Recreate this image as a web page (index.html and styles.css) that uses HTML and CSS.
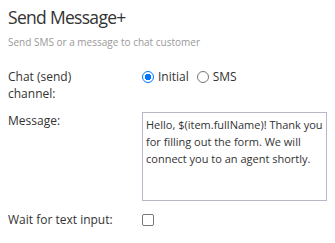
FILE: index.html
```html
<!DOCTYPE html>
<html>
<head>
<meta charset="utf-8">
<link rel="stylesheet" href="styles.css">
</head>
<body>
<div class="panel">
  <h1 class="title">Send Message+</h1>
  <p class="subtitle">Send SMS or a message to chat customer</p>
  <div class="form">
    <div class="label label-chat">Chat (send) channel:</div>
    <div class="control radios">
      <label class="radio"><span class="dot checked"></span>Initial</label>
      <label class="radio"><span class="dot"></span>SMS</label>
    </div>
    <div class="label label-msg">Message:</div>
    <div class="control">
      <div class="textarea">Hello, $(item.fullName)! Thank you for filling out the form. We will connect you to an agent shortly.</div>
    </div>
    <div class="label label-wait">Wait for text input:</div>
    <div class="control check-wrap">
      <span class="checkbox"></span>
    </div>
  </div>
</div>
</body>
</html>
```
FILE: styles.css
```css
html, body {
  margin: 0;
  padding: 0;
  background: #ffffff;
}
body {
  font-family: "Open Sans", "Noto Sans", sans-serif;
  color: #333333;
}
.panel {
  padding: 5px 8px 0 8px;
}
.title {
  margin: 0;
  font-size: 17.5px;
  font-weight: 400;
  letter-spacing: -0.7px;
  line-height: 24px;
  color: #333333;
}
.subtitle {
  margin: 6px 0 0 0;
  font-size: 10px;
  line-height: 14px;
  color: #999999;
}
.form {
  display: grid;
  grid-template-columns: 134px 1fr;
  row-gap: 10px;
  margin-top: 19px;
  font-size: 12px;
  line-height: 17px;
}
.label {
  color: #333333;
  width: 90px;
}
.label-wait {
  width: auto;
  align-self: center;
}
.radios {
  display: flex;
  gap: 8px;
  align-items: flex-start;
}
.radio {
  display: flex;
  align-items: center;
  gap: 4px;
  height: 17px;
}
.dot {
  box-sizing: border-box;
  width: 12px;
  height: 12px;
  border-radius: 50%;
  border: 1px solid #767676;
  background: #fff;
}
.dot.checked {
  border: 1.5px solid #0075ff;
  background: radial-gradient(circle, #0075ff 0 3px, #fff 3.5px);
}
.textarea {
  box-sizing: border-box;
  height: 89px;
  border: 1px solid #b7b7c8;
  padding: 3px 3px;
  font-size: 11px;
  line-height: 17px;
  color: #333333;
}
.check-wrap {
  display: flex;
  align-items: center;
  height: 17px;
}
.checkbox {
  box-sizing: border-box;
  width: 12px;
  height: 12px;
  border: 1px solid #767676;
  border-radius: 2px;
  background: #fff;
}
```
